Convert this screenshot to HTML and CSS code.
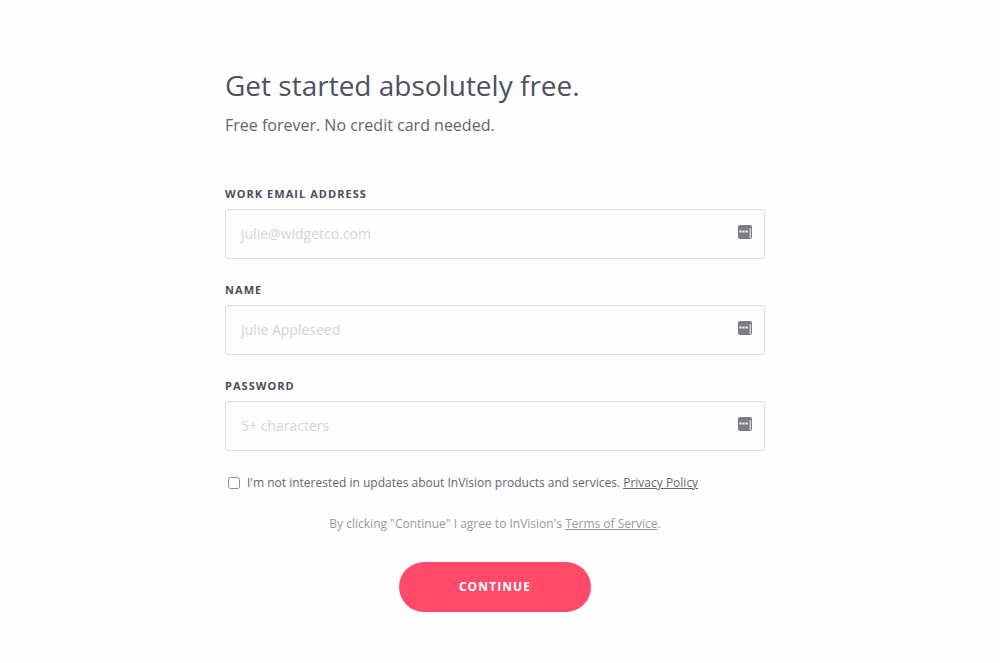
FILE: index.html
```html
<!DOCTYPE html>
<html lang="en">
  <head>
    <meta charset="UTF-8" />
    <title>Sign up</title>
    <link rel="stylesheet" href="styles.css">
  </head>
  <body>
    <form class="signup">
      <h1>Get started absolutely free.</h1>
      <p class="sub">Free forever. No credit card needed.</p>

      <label class="label first">WORK EMAIL ADDRESS</label>
      <div class="field">
        <span class="hint">julie@widgetco.com</span>
        <svg class="key" width="14" height="14" viewBox="0 0 14 14"><rect width="14" height="14" rx="2" fill="#7d7c83"/><path d="M1.500 5.500h2v2h-2zM4.500 5.500h2v2h-2zM7.500 5.500h2v2h-2z" fill="#fff"/><path d="M11.500 3h1.500v10h-1.500z" fill="#cfcfd2"/></svg>
      </div>

      <label class="label">NAME</label>
      <div class="field">
        <span class="hint">Julie Appleseed</span>
        <svg class="key" width="14" height="14" viewBox="0 0 14 14"><rect width="14" height="14" rx="2" fill="#7d7c83"/><path d="M1.500 5.500h2v2h-2zM4.500 5.500h2v2h-2zM7.500 5.500h2v2h-2z" fill="#fff"/><path d="M11.500 3h1.500v10h-1.500z" fill="#cfcfd2"/></svg>
      </div>

      <label class="label">PASSWORD</label>
      <div class="field">
        <span class="hint">5+ characters</span>
        <svg class="key" width="14" height="14" viewBox="0 0 14 14"><rect width="14" height="14" rx="2" fill="#7d7c83"/><path d="M1.500 5.500h2v2h-2zM4.500 5.500h2v2h-2zM7.500 5.500h2v2h-2z" fill="#fff"/><path d="M11.500 3h1.500v10h-1.500z" fill="#cfcfd2"/></svg>
      </div>

      <div class="opt">
        <span class="box"></span>
        <span>I'm not interested in updates about InVision products and services. <a href="#">Privacy Policy</a></span>
      </div>

      <p class="terms">By clicking "Continue" I agree to InVision's <a href="#">Terms of Service</a>.</p>

      <div class="actions">
        <span class="button">CONTINUE</span>
      </div>
    </form>
  </body>
</html>
```

FILE: styles.css
```css
* {
  margin: 0;
  box-sizing: border-box;
}
body {
  background: #fefefe;
  font-family: "Open Sans", "Liberation Sans", sans-serif;
  color: #4d4b5c;
  padding-right: 10px;
}
.signup {
  width: 540px;
  margin: 0 auto;
  padding-top: 65px;
}
h1 {
  font-size: 28px;
  line-height: 40px;
  font-weight: 400;
  color: #51505f;
}
.sub {
  font-size: 16px;
  line-height: 22px;
  margin-top: 9px;
  color: #656372;
}
.label {
  display: block;
  font-size: 11px;
  line-height: 16px;
  font-weight: 700;
  letter-spacing: 1.05px;
  color: #4d4b5c;
  margin-top: 23px;
}
.label.first {
  margin-top: 50px;
}
.field {
  display: flex;
  justify-content: space-between;
  align-items: flex-start;
  height: 50px;
  margin-top: 7px;
  padding: 14px 12px 0 15px;
  border: 1px solid #dcdce0;
  border-radius: 3px;
}
.hint {
  font-size: 14px;
  line-height: 19px;
  color: #d4d3d9;
}
.key {
  margin-top: 1px;
}
.opt {
  display: flex;
  align-items: center;
  margin-top: 23px;
  padding-left: 3px;
  font-size: 12px;
  line-height: 18px;
  color: #666473;
}
.box {
  width: 12px;
  height: 12px;
  margin-right: 7px;
  border: 1px solid #8b8a91;
  border-radius: 2.500px;
  background: #fff;
}
.opt a,
.terms a {
  color: inherit;
}
.terms {
  margin-top: 23px;
  text-align: center;
  font-size: 12px;
  line-height: 18px;
  color: #9997a4;
}
.actions {
  display: flex;
  justify-content: center;
  margin-top: 29px;
}
.button {
  width: 192px;
  height: 50px;
  border-radius: 25px;
  background: #ff4a6a;
  color: #fff;
  font-size: 12px;
  font-weight: 700;
  letter-spacing: 1.1px;
  line-height: 50px;
  text-align: center;
}
```
